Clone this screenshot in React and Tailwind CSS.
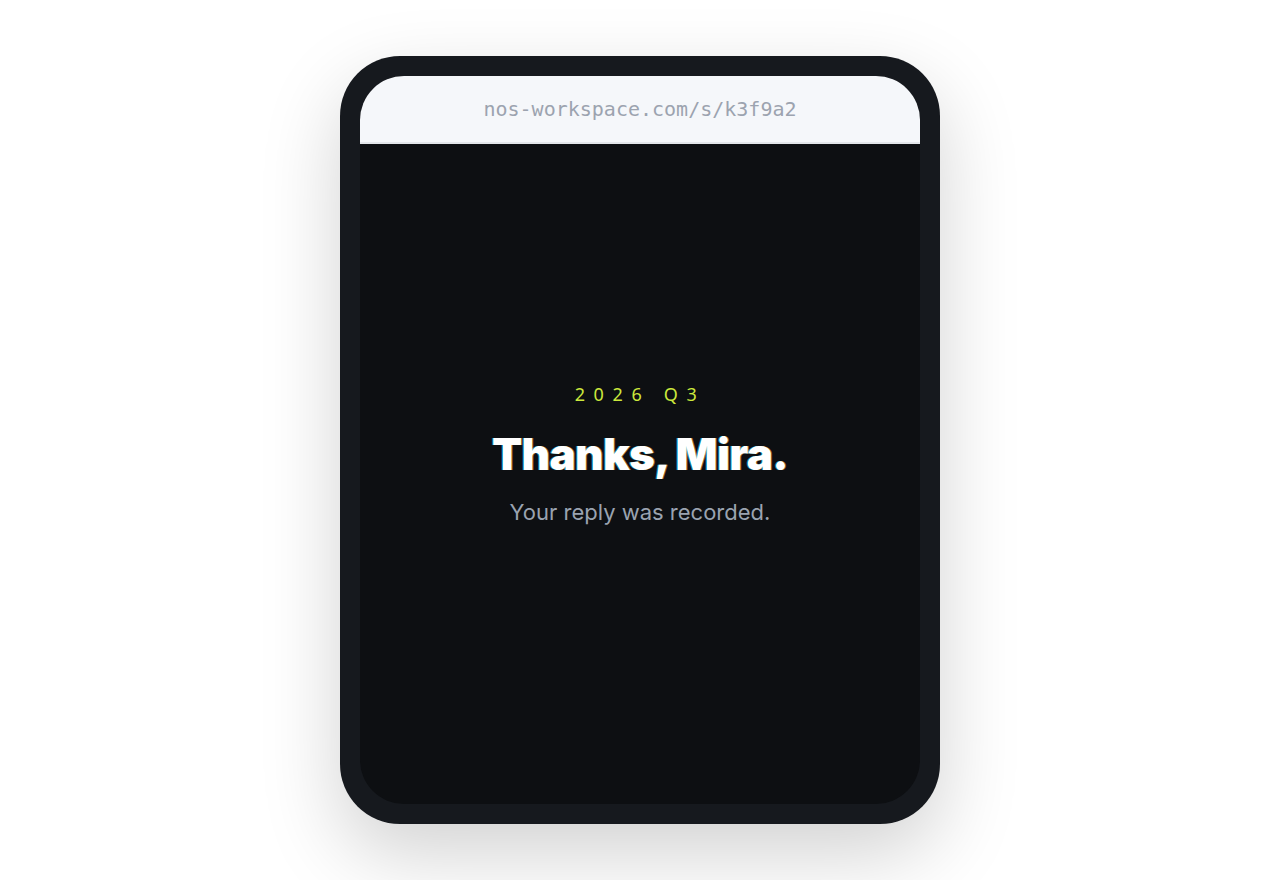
export default function App() {
  return (
    <div className="min-h-screen bg-white flex items-start justify-center pt-[56px]">
      <div className="w-[600px] h-[768px] rounded-[60px] bg-[#16191e] p-[20px] shadow-[0_30px_80px_rgba(0,0,0,0.18)]">
        <div className="h-full rounded-[44px] overflow-hidden flex flex-col bg-[#0d0f12]">
          <div className="h-[68px] shrink-0 bg-[#f5f7fa] border-b-2 border-[#e3e6ea] flex items-center justify-center">
            <span className="font-['DejaVu_Sans_Mono',monospace] text-[20px] text-[#9ca3af]">
              nos-workspace.com/s/k3f9a2
            </span>
          </div>
          <div className="flex-1 flex flex-col items-center justify-center pb-[40px]">
            <p className="font-['Noto_Sans',sans-serif] text-[18px] leading-none tracking-[0.48em] text-[#cbe83c]">
              2026 Q3
            </p>
            <h1 className="mt-[29px] font-['Inter',sans-serif] font-black text-[44px] leading-none text-white tracking-[-0.015em] [text-shadow:-1px_0_0_rgba(0,220,255,0.55),1px_0_0_rgba(255,170,60,0.55)]">
              Thanks, Mira.
            </h1>
            <p className="mt-[25px] font-['Inter',sans-serif] text-[22px] leading-none text-[#9aa3b0]">
              Your reply was recorded.
            </p>
          </div>
        </div>
      </div>
    </div>
  );
}
